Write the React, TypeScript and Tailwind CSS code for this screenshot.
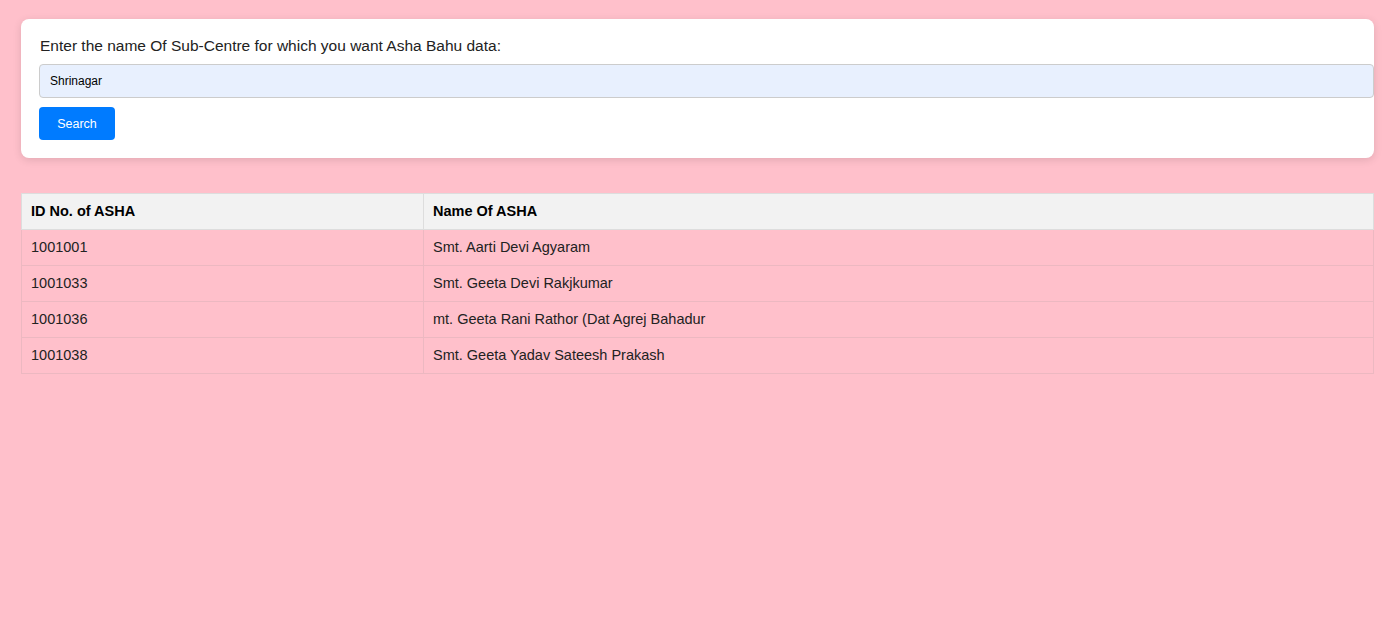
const rows = [
  { id: "1001001", name: "Smt. Aarti Devi Agyaram" },
  { id: "1001033", name: "Smt. Geeta Devi Rakjkumar" },
  { id: "1001036", name: "mt. Geeta Rani Rathor (Dat Agrej Bahadur" },
  { id: "1001038", name: "Smt. Geeta Yadav Sateesh Prakash" },
];

export default function App() {
  return (
    <div
      className="min-h-screen bg-[#ffc0cb] pt-[19px] pl-[21px] pr-[23px] text-[#222]"
      style={{ fontFamily: '"Liberation Sans", Arial, sans-serif' }}
    >
      <div className="bg-white rounded-lg shadow-[0_2px_8px_rgba(0,0,0,0.12)] p-[18px]">
        <label className="block text-[15.5px] leading-[18px] mb-[9px] ml-[1px]">
          Enter the name Of Sub-Centre for which you want Asha Bahu data:
        </label>
        <input
          type="text"
          defaultValue="Shrinagar"
          className="block w-[calc(100%+18px)] h-[34px] px-[10px] text-[12px] text-black bg-[#e8f0fe] border border-[#ccc] rounded outline-none"
        />
        <button className="mt-[9px] h-[33px] w-[76px] pt-[1px] bg-[#007bff] text-white text-[12.5px] rounded">
          Search
        </button>
      </div>

      <table className="w-full mt-[35px] border-collapse text-[14.5px]">
        <thead>
          <tr className="bg-[#f2f2f2]">
            <th className="w-[402px] h-[36px] pl-[9px] pr-[10px] text-left font-bold text-black border border-[#ddd]">
              ID No. of ASHA
            </th>
            <th className="h-[36px] pl-[9px] pr-[10px] text-left font-bold text-black border border-[#ddd]">
              Name Of ASHA
            </th>
          </tr>
        </thead>
        <tbody>
          {rows.map((r) => (
            <tr key={r.id}>
              <td className="h-[36px] pl-[9px] pr-[10px] border border-[#ecb8c1]">{r.id}</td>
              <td className="h-[36px] pl-[9px] pr-[10px] border border-[#ecb8c1]">{r.name}</td>
            </tr>
          ))}
        </tbody>
      </table>
    </div>
  );
}
